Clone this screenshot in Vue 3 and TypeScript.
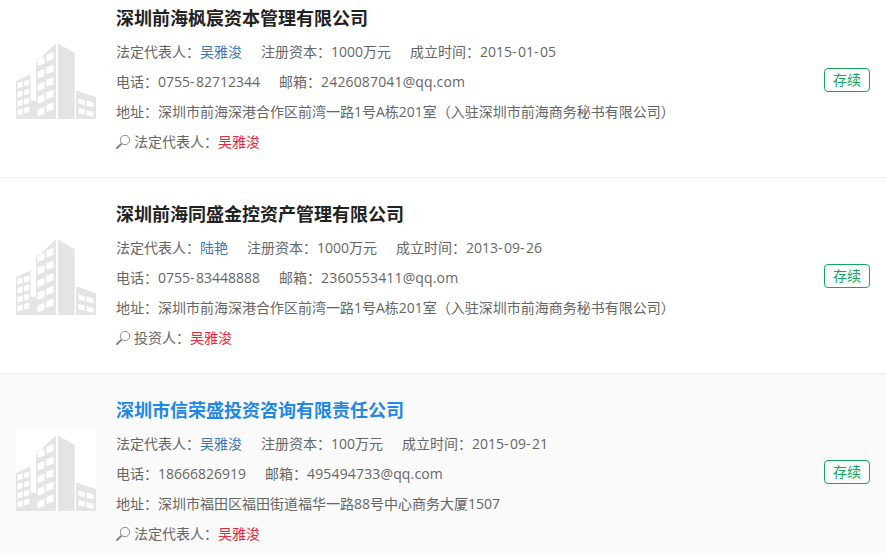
<script setup lang="ts">
interface Company {
  name: string
  rep: string
  capital: string
  date: string
  phone: string
  email: string
  address: string
  matchLabel: string
  active?: boolean
}

const companies: Company[] = [
  { name: '深圳前海枫宸资本管理有限公司', rep: '吴雅浚', capital: '1000万元', date: '2015-01-05', phone: '0755-82712344', email: '2426087041@qq.com', address: '深圳市前海深港合作区前湾一路1号A栋201室（入驻深圳市前海商务秘书有限公司）', matchLabel: '法定代表人' },
  { name: '深圳前海同盛金控资产管理有限公司', rep: '陆艳', capital: '1000万元', date: '2013-09-26', phone: '0755-83448888', email: '2360553411@qq.om', address: '深圳市前海深港合作区前湾一路1号A栋201室（入驻深圳市前海商务秘书有限公司）', matchLabel: '投资人' },
  { name: '深圳市信荣盛投资咨询有限责任公司', rep: '吴雅浚', capital: '100万元', date: '2015-09-21', phone: '18666826919', email: '495494733@qq.com', address: '深圳市福田区福田街道福华一路88号中心商务大厦1507', matchLabel: '法定代表人', active: true },
]

// Splits a value so its hyphens can be spaced a little wider than the font's own.
function parts(value: string): { text: string; hyphen: boolean }[] {
  return value.split(/(-)/).map((text) => ({ text, hyphen: text === '-' }))
}

function windows(x0: number, w: number, y0: number, h: number, slope: number, count: number, step: number): string {
  let d = ''
  for (let i = 0; i < count; i++) {
    const y = y0 + i * step
    d += `M${x0} ${y}L${x0 + w} ${y + slope}V${y + slope + h}L${x0} ${y + h}Z`
  }
  return d
}

const buildingPath =
  'M0 42L14.5 35.5V80H0ZM14.5 62H20V80H14.5ZM20 23L40 4.5V80H20ZM42 4.5L58.7 14V80H42ZM60 51.5L80 58V80H60Z' +
  windows(21.5, 7, 20, 7, -2.6, 5, 12.6) +
  windows(30.3, 7.2, 15.6, 7, -2.6, 5, 12.6) +
  windows(1.5, 5, 44, 5.5, -1.6, 4, 9) +
  windows(8.2, 5, 42, 5.5, -1.6, 4, 9) +
  windows(62.5, 6.2, 59.5, 5, 1.8, 2, 9.5) +
  windows(70.5, 7, 61.6, 5, 1.8, 2, 9.5)
</script>

<template>
  <div class="list">
    <div v-for="c in companies" :key="c.name" class="row" :class="{ active: c.active }">
      <div class="logo">
        <svg width="80" height="80" viewBox="0 0 80 80"><path :d="buildingPath" fill="#e4e4e4" fill-rule="evenodd" /></svg>
      </div>
      <div class="info">
        <div class="title">{{ c.name }}</div>
        <div class="line">
          <span class="seg">法定代表人：<span class="link">{{ c.rep }}</span></span>
          <span class="seg">注册资本：{{ c.capital }}</span>
          <span class="seg">成立时间：<span v-for="(p, i) in parts(c.date)" :key="i" :class="{ hy: p.hyphen }">{{ p.text }}</span></span>
        </div>
        <div class="line">
          <span class="seg">电话：<span v-for="(p, i) in parts(c.phone)" :key="i" :class="{ hy: p.hyphen }">{{ p.text }}</span></span>
          <span class="seg">邮箱：<span class="email">{{ c.email }}</span></span>
        </div>
        <div class="line">地址：{{ c.address }}</div>
        <div class="line match">
          <svg class="lens" width="16" height="16" viewBox="0 0 16 16" fill="none">
            <circle cx="10" cy="6" r="4.7" stroke="#8a8a8a" stroke-width="1" />
            <path d="M6.6 9.6L1.4 14.6" stroke="#8a7a6a" stroke-width="2" />
          </svg>
          <span>{{ c.matchLabel }}：<span class="hit">吴雅浚</span></span>
        </div>
      </div>
      <div class="status">存续</div>
    </div>
  </div>
</template>

<style scoped>
.list {
  margin-top: -18px;
  font-family: "Open Sans", "Noto Sans CJK SC", sans-serif;
  font-size: 14px;
  color: #666;
}
.row {
  display: flex;
  align-items: center;
  padding: 0 16px;
  height: 196px;
  box-sizing: border-box;
  border-bottom: 1px solid #eee;
  background: #fff;
}
.row.active {
  background: #fafafa;
}
.logo {
  flex: none;
  width: 80px;
  height: 80px;
  margin-right: 20px;
  margin-bottom: 1px;
  background: #fff;
}
.logo svg {
  display: block;
}
.info {
  flex: 1;
  min-width: 0;
}
.title {
  height: 32px;
  line-height: 32px;
  margin-bottom: 3px;
  font-size: 18px;
  font-weight: 700;
  color: #222;
}
.active .title {
  color: #1e88e5;
}
.line {
  height: 30px;
  line-height: 30px;
  white-space: nowrap;
}
.seg {
  margin-right: 19px;
}
.hy {
  letter-spacing: 1.5px;
}
.email {
  letter-spacing: 0.15px;
}
.link {
  color: #3d77b5;
}
.hit {
  color: #e6283f;
}
.match {
  display: flex;
  align-items: center;
}
.lens {
  flex: none;
  margin-left: -1px;
  margin-right: 3px;
}
.status {
  flex: none;
  width: 46px;
  height: 24px;
  box-sizing: border-box;
  border: 1px solid #12a75c;
  border-radius: 4px;
  color: #12a75c;
  font-size: 14px;
  line-height: 22px;
  text-align: center;
}
</style>
